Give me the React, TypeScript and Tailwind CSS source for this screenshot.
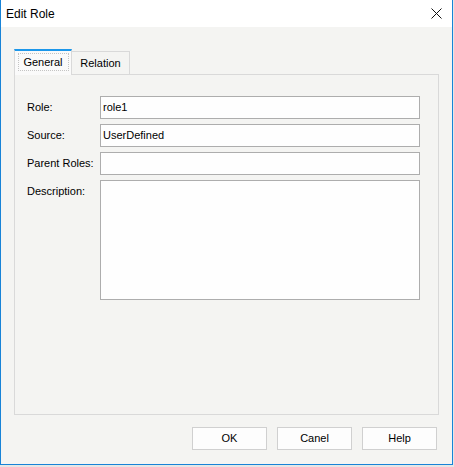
const font = { fontFamily: '"Liberation Sans", Arial, sans-serif' };

const fields = [
  { label: "Role:", value: "role1" },
  { label: "Source:", value: "UserDefined" },
  { label: "Parent Roles:", value: "" },
];

function CloseIcon() {
  return (
    <svg width="11" height="11" viewBox="0 0 11 11" className="block">
      <path d="M0.5 0.5 L10.5 10.5 M10.5 0.5 L0.5 10.5" stroke="#111" strokeWidth="1" fill="none" />
    </svg>
  );
}

export default function App() {
  return (
    <div className="w-[454px] h-[467px] bg-[#e6e6e6] text-[11px] text-black" style={font}>
      <div className="w-[453px] h-[465px] flex flex-col border-x border-b border-[#1883d7] bg-[#f4f4f2]">
        {/* title bar */}
        <div className="h-[27px] bg-white flex items-center justify-between pl-[5px] pr-[10px] shrink-0">
          <span className="text-[12px] leading-none">Edit Role</span>
          <CloseIcon />
        </div>

        <div className="flex-1 flex flex-col px-[13px] pt-[22px]">
          {/* tabs */}
          <div className="flex items-end h-[26px] -mb-px relative z-10">
            <div className="h-[26px] w-[58px] border-x border-[#d9d9d9] border-t-2 border-t-[#1c97ea] bg-[#fafafa] flex items-start justify-center pt-[2px]">
              <span className="border border-dotted border-[#c4c4c4] h-[18px] w-[51px] flex items-center justify-center">
                General
              </span>
            </div>
            <div className="h-[24px] w-[58px] border-t border-r border-[#d9d9d9] flex items-center justify-center pb-px">
              Relation
            </div>
          </div>

          {/* panel */}
          <div className="h-[341px] border border-[#d9d9d9] pl-[12px] pt-[21px]">
            {fields.map((f) => (
              <div key={f.label} className="flex items-center h-[23px] mb-[5px]">
                <div className="w-[73px]">{f.label}</div>
                <div className="w-[320px] h-[23px] border border-[#adadad] bg-[#fefefe] flex items-center px-[2px]">
                  {f.value}
                </div>
              </div>
            ))}
            <div className="flex items-start">
              <div className="w-[73px] h-[23px] flex items-center">Description:</div>
              <div className="w-[320px] h-[120px] border border-[#adadad] bg-[#fefefe]" />
            </div>
          </div>

          {/* buttons */}
          <div className="flex justify-end gap-[10px] pr-[2px] mt-[12px]">
            {["OK", "Canel", "Help"].map((b) => (
              <button
                key={b}
                className="w-[75px] h-[23px] border border-[#d0d0d0] bg-[#fdfdfd] flex items-center justify-center"
              >
                {b}
              </button>
            ))}
          </div>
        </div>
      </div>
    </div>
  );
}
